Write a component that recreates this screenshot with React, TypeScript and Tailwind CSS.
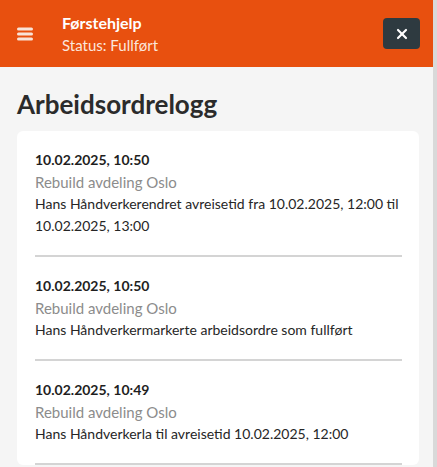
import { X } from "lucide-react";

type LoggPost = {
    tid: string;
    avdeling: string;
    tekst: string;
};

const logg: LoggPost[] = [
    {
        tid: "10.02.2025, 10:50",
        avdeling: "Rebuild avdeling Oslo",
        tekst: "Hans Håndverkerendret avreisetid fra 10.02.2025, 12:00 til 10.02.2025, 13:00",
    },
    {
        tid: "10.02.2025, 10:50",
        avdeling: "Rebuild avdeling Oslo",
        tekst: "Hans Håndverkermarkerte arbeidsordre som fullført",
    },
    {
        tid: "10.02.2025, 10:49",
        avdeling: "Rebuild avdeling Oslo",
        tekst: "Hans Håndverkerla til avreisetid 10.02.2025, 12:00",
    },
];

function Hamburger() {
    return (
        <svg width="16" height="14" viewBox="0 0 16 14" className="shrink-0">
            <rect x="0" y="0.5" width="16" height="3" rx="1.5" fill="#f8e3d8" />
            <rect x="0" y="5.5" width="16" height="3" rx="1.5" fill="#f8e3d8" />
            <rect x="0" y="10.5" width="16" height="3" rx="1.5" fill="#f8e3d8" />
        </svg>
    );
}

export default function App() {
    return (
        <div
            className="flex h-[467px] w-[437px] overflow-hidden bg-[#f5f5f5]"
            style={{ fontFamily: "Lato, 'Liberation Sans', sans-serif" }}
        >
            <div className="flex min-w-0 flex-1 flex-col">
                <header className="flex h-[67px] shrink-0 items-center bg-[#e8500f] pl-[17px] pr-[13px]">
                    <Hamburger />
                    <div className="ml-[29px] flex flex-1 flex-col text-white">
                        <span className="text-[16px] font-bold leading-[22px]">Førstehjelp</span>
                        <span className="text-[15px] leading-[22px] text-[#fbe6dc]">Status: Fullført</span>
                    </div>
                    <button className="flex h-[31px] w-[37px] items-center justify-center rounded-[4px] bg-[#2e3a40]">
                        <X size={16} strokeWidth={3.2} color="#ffffff" />
                    </button>
                </header>

                <main className="pl-[17px] pr-[14px] pt-[19px]">
                    <h1 className="text-[26px] font-bold leading-[36px] text-[#2b2b2b]">Arbeidsordrelogg</h1>
                    <div className="mt-[9px] rounded-[6px] bg-white pl-[18px] pr-[17px]">
                        {logg.map((post, idx) => (
                            <div key={idx} className="border-b-2 border-[#d4d4d4] py-[18px]">
                                <div className="text-[14px] font-bold leading-[22px] text-[#1f1f1f]">{post.tid}</div>
                                <div className="text-[15px] leading-[22px] text-[#8c8c8c]">{post.avdeling}</div>
                                <div className="text-[14px] leading-[22px] text-[#262626]">{post.tekst}</div>
                            </div>
                        ))}
                    </div>
                </main>
            </div>
            <div className="w-[4px] shrink-0 bg-[#d9d9d9]" />
        </div>
    );
}
